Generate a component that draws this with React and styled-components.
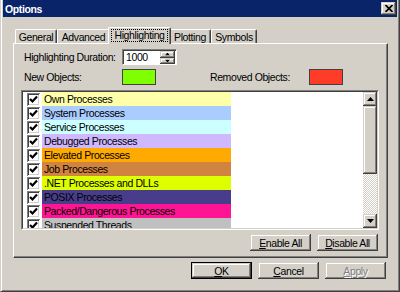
import React from 'react';
import styled, { createGlobalStyle } from 'styled-components';

const FACE = '#d4d0c8';

const ITEMS = [
  { id: 'own', label: 'Own Processes', color: '#ffffaa' },
  { id: 'system', label: 'System Processes', color: '#aaccff' },
  { id: 'service', label: 'Service Processes', color: '#ccffff' },
  { id: 'debugged', label: 'Debugged Processes', color: '#d0b8ff' },
  { id: 'elevated', label: 'Elevated Processes', color: '#ffaa00' },
  { id: 'job', label: 'Job Processes', color: '#d08440' },
  { id: 'net', label: '.NET Processes and DLLs', color: '#deff00' },
  { id: 'posix', label: 'POSIX Processes', color: '#483d8b' },
  { id: 'packed', label: 'Packed/Dangerous Processes', color: '#ff1493' },
  { id: 'suspended', label: 'Suspended Threads', color: '#c0c0c0' },
];

const TABS = [
  { id: 'general', label: 'General', width: 42 },
  { id: 'advanced', label: 'Advanced', width: 53 },
  { id: 'highlighting', label: 'Highlighting', width: 59, active: true },
  { id: 'plotting', label: 'Plotting', width: 42 },
  { id: 'symbols', label: 'Symbols', width: 46 },
];

function CheckMark() {
  return (
    <svg width="9" height="9" viewBox="0 0 9 9">
      <polyline points="1,4 3.5,6.5 8,1.5" fill="none" stroke="#000" strokeWidth="2.2" />
    </svg>
  );
}

function Arrow({ down }) {
  return (
    <svg width="7" height="4" viewBox="0 0 7 4">
      <polygon points={down ? '0,0 7,0 3.5,4' : '0,4 7,4 3.5,0'} fill="#000" />
    </svg>
  );
}

function App() {
  return (
    <>
      <GlobalStyle />
      <Window>
        <TitleBar>
          <Title>Options</Title>
          <CloseButton>
            <svg width="8" height="7" viewBox="0 0 8 7">
              <path d="M0.5 0 L7.5 7 M7.5 0 L0.5 7" stroke="#000" strokeWidth="1.7" />
            </svg>
          </CloseButton>
        </TitleBar>
        <Body>
          <TabStrip>
            {TABS.map(tab => (
              <Tab key={tab.id} $width={tab.width} $active={tab.active}>
                {tab.active ? <Focus>{tab.label}</Focus> : tab.label}
              </Tab>
            ))}
          </TabStrip>
          <Panel>
            <FieldRow>
              <Label $width={98}>Highlighting Duration:</Label>
              <SpinField>
                <SpinText>1000</SpinText>
                <SpinButtons>
                  <SpinButton><Arrow /></SpinButton>
                  <SpinButton><Arrow down /></SpinButton>
                </SpinButtons>
              </SpinField>
            </FieldRow>
            <FieldRow>
              <Label $width={98}>New Objects:</Label>
              <Swatch $color="#7fff00" />
              <Label $width={99} $gap={54}>Removed Objects:</Label>
              <Swatch $color="#ff3c28" />
            </FieldRow>
            <ListBox>
              <ListInner>
                <Items>
                  {ITEMS.map(item => (
                    <Item key={item.id}>
                      <CheckBox>
                        <CheckMark />
                      </CheckBox>
                      <Band $color={item.color}>{item.label}</Band>
                    </Item>
                  ))}
                </Items>
                <ScrollBar>
                  <ScrollButton><Arrow /></ScrollButton>
                  <Thumb />
                  <Track />
                  <ScrollButton><Arrow down /></ScrollButton>
                </ScrollBar>
              </ListInner>
            </ListBox>
            <ButtonRow>
              <Button><u>E</u>nable All</Button>
              <Button><u>D</u>isable All</Button>
            </ButtonRow>
          </Panel>
          <Footer>
            <Button $default><u>O</u>K</Button>
            <Button><u>C</u>ancel</Button>
            <Button $disabled><u>A</u>pply</Button>
          </Footer>
        </Body>
      </Window>
    </>
  );
}

export default App;

const GlobalStyle = createGlobalStyle`
  html, body {
    margin: 0;
    padding: 0;
    background: ${FACE};
  }
  body {
    font-family: "Liberation Sans", Arial, sans-serif;
    font-size: 10.5px;
    letter-spacing: -0.4px;
    color: #000;
  }
`;

const raised = `
  box-shadow: inset -1px -1px #404040, inset 1px 1px ${FACE}, inset -2px -2px #808080, inset 2px 2px #fff;
`;

const Window = styled.div`
  width: 400px;
  height: 292px;
  box-sizing: border-box;
  background: ${FACE};
  border-left: 1px solid ${FACE};
  border-right: 1px solid #404040;
  border-bottom: 1px solid #404040;
  box-shadow: inset 1px 0 #fff, inset -1px -1px #808080;
  padding: 0 2px 2px 2px;
  display: flex;
  flex-direction: column;
  overflow: hidden;
`;

const TitleBar = styled.div`
  height: 17px;
  background: #0a246a;
  display: flex;
  align-items: center;
  justify-content: space-between;
  padding-left: 2px;
`;

const Title = styled.span`
  color: #fff;
  font-weight: bold;
  padding-top: 1px;
`;

const CloseButton = styled.div`
  width: 15px;
  height: 13px;
  margin-right: 1px;
  background: ${FACE};
  display: flex;
  align-items: center;
  justify-content: center;
  ${raised}
`;

const Body = styled.div`
  display: flex;
  flex-direction: column;
  padding: 10px 9px 0 10px;
`;

const TabStrip = styled.div`
  display: flex;
  align-items: flex-end;
  height: 17px;
  padding-left: 2px;
  margin-bottom: -1px;
  position: relative;
  z-index: 1;
`;

const Tab = styled.div`
  box-sizing: border-box;
  width: ${p => p.$width + (p.$active ? 4 : 0)}px;
  height: ${p => (p.$active ? 17 : 14)}px;
  margin: ${p => (p.$active ? '0 -2px' : '0 0 1px')};
  background: ${FACE};
  border-top: 1px solid #fff;
  border-left: 1px solid #fff;
  border-right: 1px solid #404040;
  border-radius: 2px 2px 0 0;
  box-shadow: inset -1px 0 #808080;
  display: flex;
  justify-content: center;
  align-items: flex-start;
  padding-top: 1px;
  position: relative;
  z-index: ${p => (p.$active ? 2 : 1)};
`;

const Focus = styled.span`
  border: 1px dotted #000;
  padding: 0 2px;
  line-height: 11px;
`;

const Panel = styled.div`
  box-sizing: border-box;
  height: 215px;
  border: 1px solid;
  border-color: #fff #404040 #404040 #fff;
  box-shadow: inset -1px -1px #808080;
  padding: 5px 9px 0 7px;
  display: flex;
  flex-direction: column;
`;

const FieldRow = styled.div`
  display: flex;
  align-items: center;
  height: 16px;
  margin-bottom: 4px;
`;

const Label = styled.span`
  width: ${p => p.$width}px;
  margin-left: ${p => p.$gap || 3}px;
  white-space: nowrap;
`;

const SpinField = styled.div`
  box-sizing: border-box;
  width: 55px;
  height: 16px;
  background: #fff;
  border: 1px solid;
  border-color: #808080 #fff #fff #808080;
  box-shadow: inset 1px 1px #404040;
  display: flex;
  padding: 1px 1px 0 1px;
`;

const SpinText = styled.span`
  flex: 1;
  padding-left: 2px;
  line-height: 13px;
`;

const SpinButtons = styled.div`
  width: 15px;
  display: flex;
  flex-direction: column;
`;

const SpinButton = styled.div`
  flex: 1;
  background: ${FACE};
  display: flex;
  align-items: center;
  justify-content: center;
  ${raised}
  svg { transform: scale(0.7); }
`;

const Swatch = styled.div`
  box-sizing: border-box;
  width: 34px;
  height: 16px;
  background: ${p => p.$color};
  border: 1px solid #404040;
`;

const ListBox = styled.div`
  box-sizing: border-box;
  width: 358px;
  height: 140px;
  margin-top: 1px;
  border: 1px solid;
  border-color: #808080 #fff #fff #808080;
  display: flex;
`;

const ListInner = styled.div`
  flex: 1;
  border: 1px solid;
  border-color: #404040 ${FACE} ${FACE} #404040;
  background: #fff;
  display: flex;
  overflow: hidden;
`;

const Items = styled.div`
  flex: 1;
  display: flex;
  flex-direction: column;
  overflow: hidden;
`;

const Item = styled.div`
  display: flex;
  align-items: center;
  height: 14px;
  flex-shrink: 0;
  padding-left: 4px;
`;

const CheckBox = styled.div`
  box-sizing: border-box;
  width: 13px;
  height: 13px;
  background: #fff;
  box-shadow: inset 1px 1px #808080, inset -1px -1px #fff, inset 2px 2px #404040, inset -2px -2px ${FACE};
  display: flex;
  align-items: center;
  justify-content: center;
  margin-right: 2px;
`;

const Band = styled.div`
  width: 187px;
  height: 14px;
  line-height: 15px;
  padding-left: 2px;
  background: ${p => p.$color};
  white-space: nowrap;
`;

const ScrollBar = styled.div`
  width: 14px;
  display: flex;
  flex-direction: column;
`;

const ScrollButton = styled.div`
  height: 14px;
  flex-shrink: 0;
  background: ${FACE};
  display: flex;
  align-items: center;
  justify-content: center;
  ${raised}
`;

const Thumb = styled.div`
  height: 68px;
  background: ${FACE};
  ${raised}
`;

const Track = styled.div`
  flex: 1;
  background: repeating-conic-gradient(#fff 0 25%, ${FACE} 0 50%) 0 0 / 2px 2px;
`;

const ButtonRow = styled.div`
  display: flex;
  justify-content: flex-end;
  gap: 6px;
  margin-top: 4px;
`;

const Button = styled.div`
  box-sizing: border-box;
  width: 61px;
  height: 17px;
  background: ${FACE};
  display: flex;
  align-items: center;
  justify-content: center;
  ${raised}
  ${p => p.$default && 'border: 1px solid #000;'}
  color: ${p => (p.$disabled ? '#808080' : '#000')};
  text-shadow: ${p => (p.$disabled ? '1px 1px #fff' : 'none')};
`;

const Footer = styled.div`
  display: flex;
  justify-content: flex-end;
  gap: 6px;
  margin-top: 4px;
  padding-right: 2px;
`;
